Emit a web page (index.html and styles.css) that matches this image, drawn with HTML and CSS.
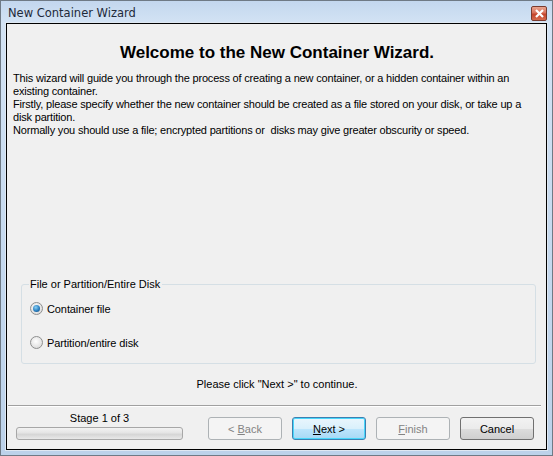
FILE: index.html
```html
<!DOCTYPE html>
<html>
<head>
<meta charset="utf-8">
<link rel="stylesheet" href="styles.css">
</head>
<body>
<div class="window">
  <div class="titlebar">
    <span class="title">New Container Wizard</span>
    <span class="close"><svg width="11" height="9" viewBox="0 0 11 9"><path d="M2 1 L9 8 M9 1 L2 8" stroke="#fff" stroke-width="2.2" fill="none"/></svg></span>
  </div>
  <div class="client">
    <h1 class="heading">Welcome to the New Container Wizard.</h1>
    <div class="info">
      <p>This wizard will guide you through the process of creating a new container, or a hidden container within an existing container.</p>
      <p>Firstly, please specify whether the new container should be created as a file stored on your disk, or take up a disk partition.</p>
      <p>Normally you should use a file; encrypted partitions or&nbsp; disks may give greater obscurity or speed.</p>
    </div>
    <fieldset class="group">
      <legend>File or Partition/Entire Disk</legend>
      <label class="radio"><span class="dot checked"></span>Container file</label>
      <label class="radio"><span class="dot"></span>Partition/entire disk</label>
    </fieldset>
    <div class="hint">Please click "Next &gt;" to continue.</div>
    <div class="footer">
      <div class="stage">
        <div class="stage-label">Stage 1 of 3</div>
        <div class="progress"></div>
      </div>
      <div class="buttons">
        <span class="btn disabled"><span>&lt; <u>B</u>ack</span></span>
        <span class="btn default"><span><u>N</u>ext &gt;</span></span>
        <span class="btn disabled"><span><u>F</u>inish</span></span>
        <span class="btn"><span>Cancel</span></span>
      </div>
    </div>
  </div>
</div>
</body>
</html>
```
FILE: styles.css
```css
html, body {
  margin: 0;
  padding: 0;
  width: 553px;
  height: 456px;
  overflow: hidden;
}
.window {
  box-sizing: border-box;
  width: 553px;
  height: 456px;
  border: 1px solid #6f7a85;
  background: linear-gradient(to bottom, #c3d7ee 0px, #d3e3f4 22px, #c4d8ee 60%, #bcd2ea 100%);
  padding: 0 5px 5px 5px;
  display: flex;
  flex-direction: column;
  font-family: "Liberation Sans", Arial, sans-serif;
}
.titlebar {
  height: 22px;
  display: flex;
  align-items: center;
  justify-content: space-between;
  padding: 0 0 0 2px;
}
.title {
  font-family: "DejaVu Sans", sans-serif;
  font-size: 11.5px;
  color: #1e2a3a;
  margin-top: 2px;
}
.close {
  width: 16px;
  height: 15px;
  margin-top: 3px;
  border: 1px solid #7a3b2f;
  border-radius: 2px;
  background: linear-gradient(to bottom, #e9a590 0%, #d9715a 45%, #c4432a 55%, #d56b4e 100%);
  display: flex;
  align-items: center;
  justify-content: center;
  box-sizing: border-box;
}
.client {
  flex: 1;
  border: 1px solid #000;
  outline: 1px solid #dfe8f2;
  background: #f0f0f0;
  display: flex;
  flex-direction: column;
  padding: 0 5px 0 6px;
  color: #000;
}
.heading {
  margin: 17px 0 0 0;
  text-align: center;
  font-size: 17px;
  font-weight: bold;
  height: 23px;
  line-height: 23px;
}
.info {
  margin-top: 8px;
  height: 206px;
  font-size: 11px;
  line-height: 13px;
  letter-spacing: -0.18px;
}
.info p { margin: 0; }
.group {
  margin: 0 5px 0 8px;
  border: 1px solid #d5dfe5;
  border-radius: 3px;
  padding: 0 8px;
  height: 86px;
  font-size: 11px;
  box-sizing: border-box;
}
.group legend {
  padding: 0 2px 0 1px;
  margin-left: -1px;
}
.radio {
  display: flex;
  align-items: center;
  height: 13px;
  margin-top: 12px;
  letter-spacing: -0.1px;
}
.radio + .radio { margin-top: 21px; }
.dot {
  width: 11px;
  height: 11px;
  border-radius: 50%;
  border: 1px solid #8e8f8f;
  background: radial-gradient(circle at 45% 40%, #ffffff 0%, #e4e4e4 60%, #cfcfcf 100%);
  margin-right: 4px;
  position: relative;
}
.dot.checked::after {
  content: "";
  position: absolute;
  left: 2px;
  top: 2px;
  width: 7px;
  height: 7px;
  border-radius: 50%;
  background: radial-gradient(circle at 40% 35%, #8ad1f5 0%, #2a7fc0 55%, #0e3d6b 100%);
}
.hint {
  text-align: center;
  font-size: 11px;
  margin-top: 14px;
  height: 15px;
}
.footer {
  margin-top: 12px;
  border-top: 1px solid #a0a0a0;
  box-shadow: inset 0 1px 0 #ffffff;
  display: flex;
  align-items: flex-start;
  margin-left: -5px;
}
.stage {
  width: 167px;
  margin-left: 8px;
  display: flex;
  flex-direction: column;
  align-items: center;
}
.stage-label {
  font-size: 11px;
  height: 14px;
  line-height: 14px;
  margin-top: 5px;
}
.progress {
  margin-top: 2px;
  width: 167px;
  height: 13px;
  box-sizing: border-box;
  border: 1px solid #a7a7a7;
  border-radius: 3px;
  background: linear-gradient(to bottom, #f3f3f3 0%, #e6e6e6 40%, #d6d6d6 60%, #e9e9e9 100%);
}
.buttons {
  display: flex;
  margin-left: 25px;
  gap: 10px;
  margin-top: 11px;
}
.btn {
  box-sizing: border-box;
  width: 74px;
  height: 23px;
  border: 1px solid #707070;
  border-radius: 3px;
  background: linear-gradient(to bottom, #f2f2f2 0%, #ebebeb 50%, #dddddd 50%, #cfcfcf 100%);
  font-size: 11px;
  display: flex;
  align-items: center;
  justify-content: center;
  color: #000;
}
.btn.disabled {
  border-color: #adb2b5;
  background: #f4f4f4;
  color: #838383;
}
.btn.default {
  border-color: #3c7fb1;
  box-shadow: inset 0 0 0 1px #48d7fb;
  background: linear-gradient(to bottom, #eaf6fd 0%, #d9f0fc 50%, #bee6fd 50%, #a7d9f5 100%);
}
```
